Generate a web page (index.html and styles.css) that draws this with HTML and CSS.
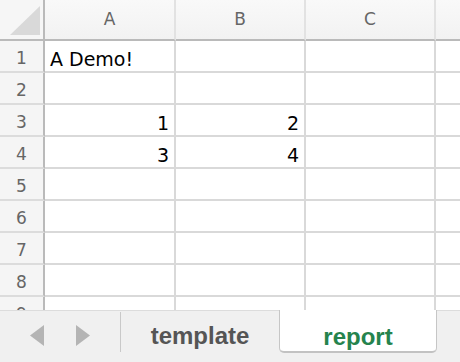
FILE: index.html
```html
<!DOCTYPE html>
<html lang="en">
<head>
    <meta charset="UTF-8">
    <meta name="viewport" content="width=device-width, initial-scale=1.0">
    <title>report</title>
    <link rel="stylesheet" href="styles.css">
</head>
<body>
    <div class="workbook">
        <div class="sheet">
            <div class="cell corner">
                <svg width="43" height="39" viewBox="0 0 43 39"><polygon points="10,35 40,35 40,6" fill="#d9d9d9"/></svg>
            </div>
            <div class="cell col-head">A</div>
            <div class="cell col-head">B</div>
            <div class="cell col-head">C</div>
            <div class="cell col-head last"></div>

            <div class="cell row-head">1</div>
            <div class="cell">A Demo!</div>
            <div class="cell"></div>
            <div class="cell"></div>
            <div class="cell last"></div>

            <div class="cell row-head">2</div>
            <div class="cell"></div>
            <div class="cell"></div>
            <div class="cell"></div>
            <div class="cell last"></div>

            <div class="cell row-head">3</div>
            <div class="cell num">1</div>
            <div class="cell num">2</div>
            <div class="cell"></div>
            <div class="cell last"></div>

            <div class="cell row-head">4</div>
            <div class="cell num">3</div>
            <div class="cell num">4</div>
            <div class="cell"></div>
            <div class="cell last"></div>

            <div class="cell row-head">5</div>
            <div class="cell"></div>
            <div class="cell"></div>
            <div class="cell"></div>
            <div class="cell last"></div>

            <div class="cell row-head">6</div>
            <div class="cell"></div>
            <div class="cell"></div>
            <div class="cell"></div>
            <div class="cell last"></div>

            <div class="cell row-head">7</div>
            <div class="cell"></div>
            <div class="cell"></div>
            <div class="cell"></div>
            <div class="cell last"></div>

            <div class="cell row-head">8</div>
            <div class="cell"></div>
            <div class="cell"></div>
            <div class="cell"></div>
            <div class="cell last"></div>

            <div class="cell row-head">9</div>
            <div class="cell"></div>
            <div class="cell"></div>
            <div class="cell"></div>
            <div class="cell last"></div>
        </div>

        <div class="tab-bar">
            <div class="tab-nav">
                <svg width="14" height="21" viewBox="0 0 14 21"><polygon points="14,0 0,10.5 14,21" fill="#b4b4b4"/></svg>
                <svg width="14" height="21" viewBox="0 0 14 21"><polygon points="0,0 14,10.5 0,21" fill="#b4b4b4"/></svg>
            </div>
            <div class="tab-sep"></div>
            <div class="tab">template</div>
            <div class="tab active">report</div>
        </div>
    </div>
</body>
</html>
```

FILE: styles.css
```css
body {
    margin: 0;
    background: white;
    overflow: hidden;
}

.workbook {
    width: 460px;
    height: 362px;
    display: flex;
    flex-direction: column;
}

.sheet {
    height: 310px;
    overflow: hidden;
    display: grid;
    grid-template-columns: 45px 131px 130px 130px 1fr;
    grid-template-rows: 41px repeat(9, 32px);
    font-family: "DejaVu Sans", sans-serif;
    font-size: 19px;
    color: #000;
}

.cell {
    box-sizing: border-box;
    border-right: 2px solid #d9d9d9;
    border-bottom: 2px solid #d9d9d9;
    padding: 0 5px 1px;
    display: flex;
    align-items: flex-end;
    white-space: nowrap;
    overflow: hidden;
}

.cell.last {
    border-right: none;
}

.cell.num {
    justify-content: flex-end;
}

.corner {
    padding: 0;
    background: #f6f6f6;
    border-right-color: #bababa;
    border-bottom-color: #bababa;
}

.col-head {
    background: linear-gradient(#f9f9f9, #f2f2f2);
    border-right-color: #e2e2e2;
    border-bottom-color: #bababa;
    justify-content: center;
    align-items: center;
    padding: 0 0 1px;
    font-size: 17px;
    color: #666;
}

.row-head {
    background: #f5f5f5;
    border-right-color: #bababa;
    border-bottom-color: #dcdcdc;
    justify-content: center;
    padding: 0 0 3px;
    font-size: 17px;
    color: #666;
}

.tab-bar {
    flex: 1;
    display: flex;
    background: #f0f0f0;
    border-top: 1px solid #dcdcdc;
    font-family: "Liberation Sans", Arial, sans-serif;
    font-size: 24px;
    font-weight: bold;
}

.tab-nav {
    width: 120px;
    display: flex;
    align-items: center;
    justify-content: center;
    gap: 32px;
    padding-bottom: 2px;
    box-sizing: border-box;
}

.tab-sep {
    width: 1px;
    height: 40px;
    margin-top: 1px;
    background: #c9c9c9;
}

.tab {
    width: 158px;
    box-sizing: border-box;
    display: flex;
    justify-content: center;
    align-items: flex-end;
    padding-bottom: 12px;
    color: #555;
}

.tab.active {
    width: 158px;
    height: 43px;
    margin-top: -1px;
    background: white;
    color: #25834d;
    border: 1px solid #c6c6c6;
    border-top: none;
    border-bottom: 2px solid #c2c2c2;
    border-radius: 0 0 5px 5px;
    padding-bottom: 0;
}
```
